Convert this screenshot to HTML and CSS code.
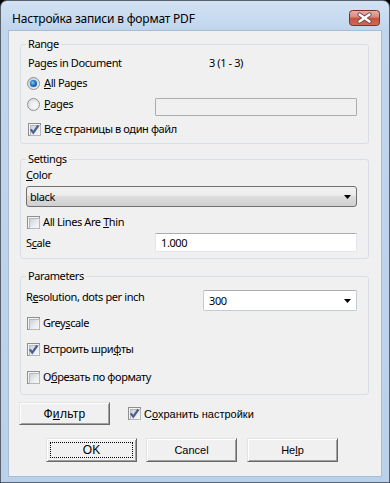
FILE: index.html
```html
<!DOCTYPE html>
<html>
<head>
<meta charset="utf-8">
<link rel="stylesheet" href="styles.css">
</head>
<body>
<div class="window">
  <div class="titlebar">
    <span class="title">Настройка записи в формат PDF</span>
    <div class="close">
      <svg width="31" height="16" viewBox="0 0 31 16">
        <defs>
          <linearGradient id="cg" x1="0" y1="0" x2="0" y2="1">
            <stop offset="0" stop-color="#eab2a6"/>
            <stop offset="0.45" stop-color="#d98877"/>
            <stop offset="0.5" stop-color="#c5513f"/>
            <stop offset="1" stop-color="#cf6c58"/>
          </linearGradient>
        </defs>
        <rect x="0.5" y="0.5" width="30" height="15" rx="3" fill="url(#cg)" stroke="#77342b"/>
        <path d="M10.5 4.5 L20.5 11.5 M20.5 4.5 L10.5 11.5" stroke="#6b4a45" stroke-width="4.2" stroke-linecap="round"/>
        <path d="M10.5 4.5 L20.5 11.5 M20.5 4.5 L10.5 11.5" stroke="#ffffff" stroke-width="2.4" stroke-linecap="round"/>
      </svg>
    </div>
  </div>
  <div class="client">
    <fieldset class="group group-range">
      <legend>Range</legend>
      <div class="row r-doc">
        <span class="lbl lbl-range">Pages in Document</span>
        <span>3 (1 - 3)</span>
      </div>
      <div class="row r-all">
        <span class="radio checked"><span class="dot"></span></span>
        <span class="opt"><u>A</u>ll Pages</span>
      </div>
      <div class="row r-pages">
        <div class="radio-wrap">
          <span class="radio"><span class="dot"></span></span>
          <span class="opt"><u>P</u>ages</span>
        </div>
        <span class="input input-disabled"></span>
      </div>
      <div class="row r-one">
        <span class="cb checked">
          <svg width="11" height="11" viewBox="0 0 11 11"><path d="M1.8 5.4 L4.3 8.6 L9.3 1.5" fill="none" stroke="#4a5f95" stroke-width="2.2"/></svg>
        </span>
        <span class="opt">Вс<u>е</u> страницы в один файл</span>
      </div>
    </fieldset>

    <fieldset class="group group-settings">
      <legend>Settings</legend>
      <div class="row r-color"><span><u>C</u>olor</span></div>
      <div class="combo combo-gray">
        <span class="combo-text">black</span>
        <svg class="arrow" width="7" height="4" viewBox="0 0 7 4"><polygon points="0,0 7,0 3.5,4" fill="#000"/></svg>
      </div>
      <div class="row r-thin">
        <span class="cb"></span>
        <span class="opt">All Lines Are <u>T</u>hin</span>
      </div>
      <div class="row r-scale">
        <span class="lbl lbl-scale">S<u>c</u>ale</span>
        <span class="input input-white">1.000</span>
      </div>
    </fieldset>

    <fieldset class="group group-params">
      <legend>Parameters</legend>
      <div class="row r-res">
        <span class="lbl lbl-res">R<u>e</u>solution, dots per inch</span>
        <div class="combo combo-white">
          <span class="combo-text">300</span>
          <svg class="arrow" width="7" height="4" viewBox="0 0 7 4"><polygon points="0,0 7,0 3.5,4" fill="#000"/></svg>
        </div>
      </div>
      <div class="row r-grey">
        <span class="cb"></span>
        <span class="opt">Grey<u>s</u>cale</span>
      </div>
      <div class="row r-embed">
        <span class="cb checked">
          <svg width="11" height="11" viewBox="0 0 11 11"><path d="M1.8 5.4 L4.3 8.6 L9.3 1.5" fill="none" stroke="#4a5f95" stroke-width="2.2"/></svg>
        </span>
        <span class="opt">Встроить шри<u>ф</u>ты</span>
      </div>
      <div class="row r-crop">
        <span class="cb"></span>
        <span class="opt">О<u>б</u>резать по формату</span>
      </div>
    </fieldset>

    <div class="bottom-row">
      <button class="btn btn-filter">Ф<u>и</u>льтр</button>
      <span class="cb cb-save checked">
        <svg width="11" height="11" viewBox="0 0 11 11"><path d="M1.8 5.4 L4.3 8.6 L9.3 1.5" fill="none" stroke="#4a5f95" stroke-width="2.2"/></svg>
      </span>
      <span class="save-label">С<u>о</u>хранить настройки</span>
    </div>

    <div class="buttons">
      <button class="btn btn-ok"><span class="focus">OK</span></button>
      <button class="btn btn-cancel">Cancel</button>
      <button class="btn btn-help">He<u>l</u>p</button>
    </div>
  </div>
</div>
</body>
</html>
```

FILE: styles.css
```css
* {
  box-sizing: border-box;
}

html,
body {
  margin: 0;
  padding: 0;
}

body {
  width: 390px;
  height: 483px;
  overflow: hidden;
  background: #000;
  font-family: "Noto Sans", "Open Sans", sans-serif;
  font-size: 11px;
  letter-spacing: -0.4px;
  line-height: 14px;
  color: #000;
}

u {
  text-decoration: underline;
  text-underline-offset: 1px;
}

.window {
  width: 390px;
  height: 483px;
  border: 1px solid #59626e;
  border-radius: 7px 7px 0 0;
  background: linear-gradient(to bottom, #d2e2f3 0, #c0d6ed 29px, #b9d1ea 100%);
  padding: 0 7px;
  display: flex;
  flex-direction: column;
}

.titlebar {
  height: 29px;
  flex: 0 0 29px;
  display: flex;
  align-items: flex-start;
}

.title {
  margin-left: 4px;
  margin-top: 11px;
  font-size: 12px;
  letter-spacing: -0.2px;
  line-height: 14px;
  color: #000;
}

.close {
  margin-left: auto;
  margin-right: 2px;
  margin-top: 9px;
  width: 31px;
  height: 16px;
}

.close svg {
  display: block;
}

.client {
  flex: 0 0 447px;
  height: 447px;
  background: #f0f0f0;
  border: 1px solid #a9bcd3;
  display: flex;
  flex-direction: column;
}

/* group boxes */
.group {
  margin: 0 0 0 11px;
  width: 349px;
  min-width: 0;
  border: 1px solid #d5dfe5;
  border-radius: 3px;
  padding: 0 11px 0 5px;
  display: flex;
  flex-direction: column;
}

.group legend {
  padding: 0 2px;
  margin-left: 0;
  line-height: 14px;
  height: 14px;
}

.group-range {
  margin-top: 6px;
  padding-left: 7px;
  padding-top: 2px;
  padding-bottom: 4px;
}

.group-range legend {
  margin-left: -2px;
}

.group-settings {
  margin-top: 8px;
  padding-bottom: 5px;
}

.group-params {
  margin-top: 10px;
  padding-top: 7px;
  padding-bottom: 7px;
}

.row {
  display: flex;
  align-items: center;
  height: 20px;
}

.lbl-range {
  width: 181px;
}

.opt {
  margin-left: 3px;
}

.radio-wrap {
  display: flex;
  align-items: center;
  height: 16px;
  align-self: flex-start;
}

.r-pages {
  margin-top: 3px;
}

.r-one {
  margin-top: 3px;
}

/* radio */
.radio {
  position: relative;
  width: 13px;
  height: 13px;
  margin-left: -1px;
  margin-right: 1px;
  border-radius: 50%;
  border: 1px solid #8e8f8f;
  background: linear-gradient(135deg, #d9dce1 0%, #f4f4f4 100%);
  flex: 0 0 13px;
}

.radio .dot {
  position: absolute;
  left: 2px;
  top: 2px;
  width: 7px;
  height: 7px;
  border-radius: 50%;
  background: linear-gradient(135deg, #e6e8eb, #fbfbfb);
}

.radio.checked {
  background: linear-gradient(135deg, #c9ced6 0%, #f2f4f6 100%);
}

.radio.checked .dot {
  left: 2px;
  top: 2px;
  width: 7px;
  height: 7px;
  background: radial-gradient(circle at 40% 40%, #8fd0f8 0, #2a82d0 35%, #16559a 75%, #1b4f86 100%);
  box-shadow: 0 0 1px #6aa6dc;
}

/* checkbox */
.cb {
  position: relative;
  width: 13px;
  height: 13px;
  flex: 0 0 13px;
  border: 1px solid #8e8f8f;
  background: #f4f4f4;
  display: flex;
  align-items: center;
  justify-content: center;
}

.cb::before {
  content: "";
  position: absolute;
  left: 1px;
  top: 1px;
  width: 9px;
  height: 9px;
  border: 1px solid #b4b8bd;
  background: linear-gradient(135deg, #cdd1d7 0%, #eceef0 60%, #f7f7f7 100%);
}

.cb svg {
  position: relative;
  display: block;
}

/* inputs */
.input {
  display: block;
  margin-left: auto;
  width: 202px;
}

.input-disabled {
  height: 18px;
  align-self: flex-end;
  border: 1px solid #adadad;
  background: #f0f0f0;
  border-radius: 1px;
}

.input-white {
  height: 19px;
  align-self: flex-start;
  border: 1px solid #e2e7ee;
  border-top-color: #abadb3;
  background: #fff;
  border-radius: 1px;
  padding: 2px 0 0 5px;
  line-height: 14px;
}

/* settings */
.r-color {
  height: 18px;
}

.combo {
  position: relative;
  display: flex;
  align-items: center;
  height: 21px;
}

.combo-gray {
  margin-top: 2px;
  border: 1px solid #707070;
  border-radius: 3px;
  background: linear-gradient(to bottom, #f2f2f2 0%, #ebebeb 45%, #dddddd 50%, #cfcfcf 100%);
  padding-left: 3px;
}

.combo .arrow {
  position: absolute;
  right: 5px;
  top: 8px;
}

.r-thin {
  margin-top: 5px;
}

.r-thin .cb {
  margin-left: 1px;
}

.r-scale {
  margin-top: 1px;
  align-items: flex-start;
}

.r-scale .lbl {
  line-height: 20px;
}

.lbl-scale {
  width: 129px;
}

/* parameters */
.r-res {
  height: 21px;
  align-items: flex-start;
}

.lbl-res {
  width: 177px;
  line-height: 14px;
}

.combo-white {
  width: 154px;
  border: 1px solid #c4cbd4;
  border-top-color: #abadb3;
  border-radius: 2px;
  background: #fff;
  padding-left: 5px;
}

.r-grey {
  margin-top: 2px;
}

.r-embed {
  margin-top: 6px;
}

.r-crop {
  margin-top: 8px;
}

.r-grey .cb,
.r-embed .cb,
.r-crop .cb {
  margin-left: 1px;
}

/* bottom */
.btn {
  font-family: "Liberation Sans", Arial, sans-serif;
  font-size: 11px;
  letter-spacing: 0;
  color: #000;
  width: 91px;
  height: 23px;
  padding: 0;
  margin: 0;
  background: #f0f0f0;
  border: 1px solid;
  border-color: #e3e3e3 #696969 #696969 #e3e3e3;
  box-shadow: inset 1px 1px #ffffff, inset -1px -1px #a0a0a0;
  display: flex;
  align-items: center;
  justify-content: center;
}

.btn-filter {
  font-size: 12px;
  letter-spacing: 0.3px;
}

.bottom-row {
  display: flex;
  align-items: center;
  margin-top: 7px;
  margin-left: 10px;
  height: 23px;
}

.cb-save {
  margin-left: 18px;
}

.save-label {
  margin-left: 3px;
  font-family: "Liberation Sans", Arial, sans-serif;
  font-size: 11px;
  letter-spacing: 0;
}

.buttons {
  display: flex;
  margin-top: 13px;
  margin-left: 37px;
}

.btn-ok {
  height: 24px;
  font-size: 12px;
}

.btn-ok .focus {
  width: 83px;
  height: 16px;
  border: 1px dotted #000;
  display: flex;
  align-items: center;
  justify-content: center;
}

.btn-cancel {
  margin-left: 9px;
  height: 24px;
}

.btn-help {
  margin-left: 10px;
  height: 24px;
}
```
